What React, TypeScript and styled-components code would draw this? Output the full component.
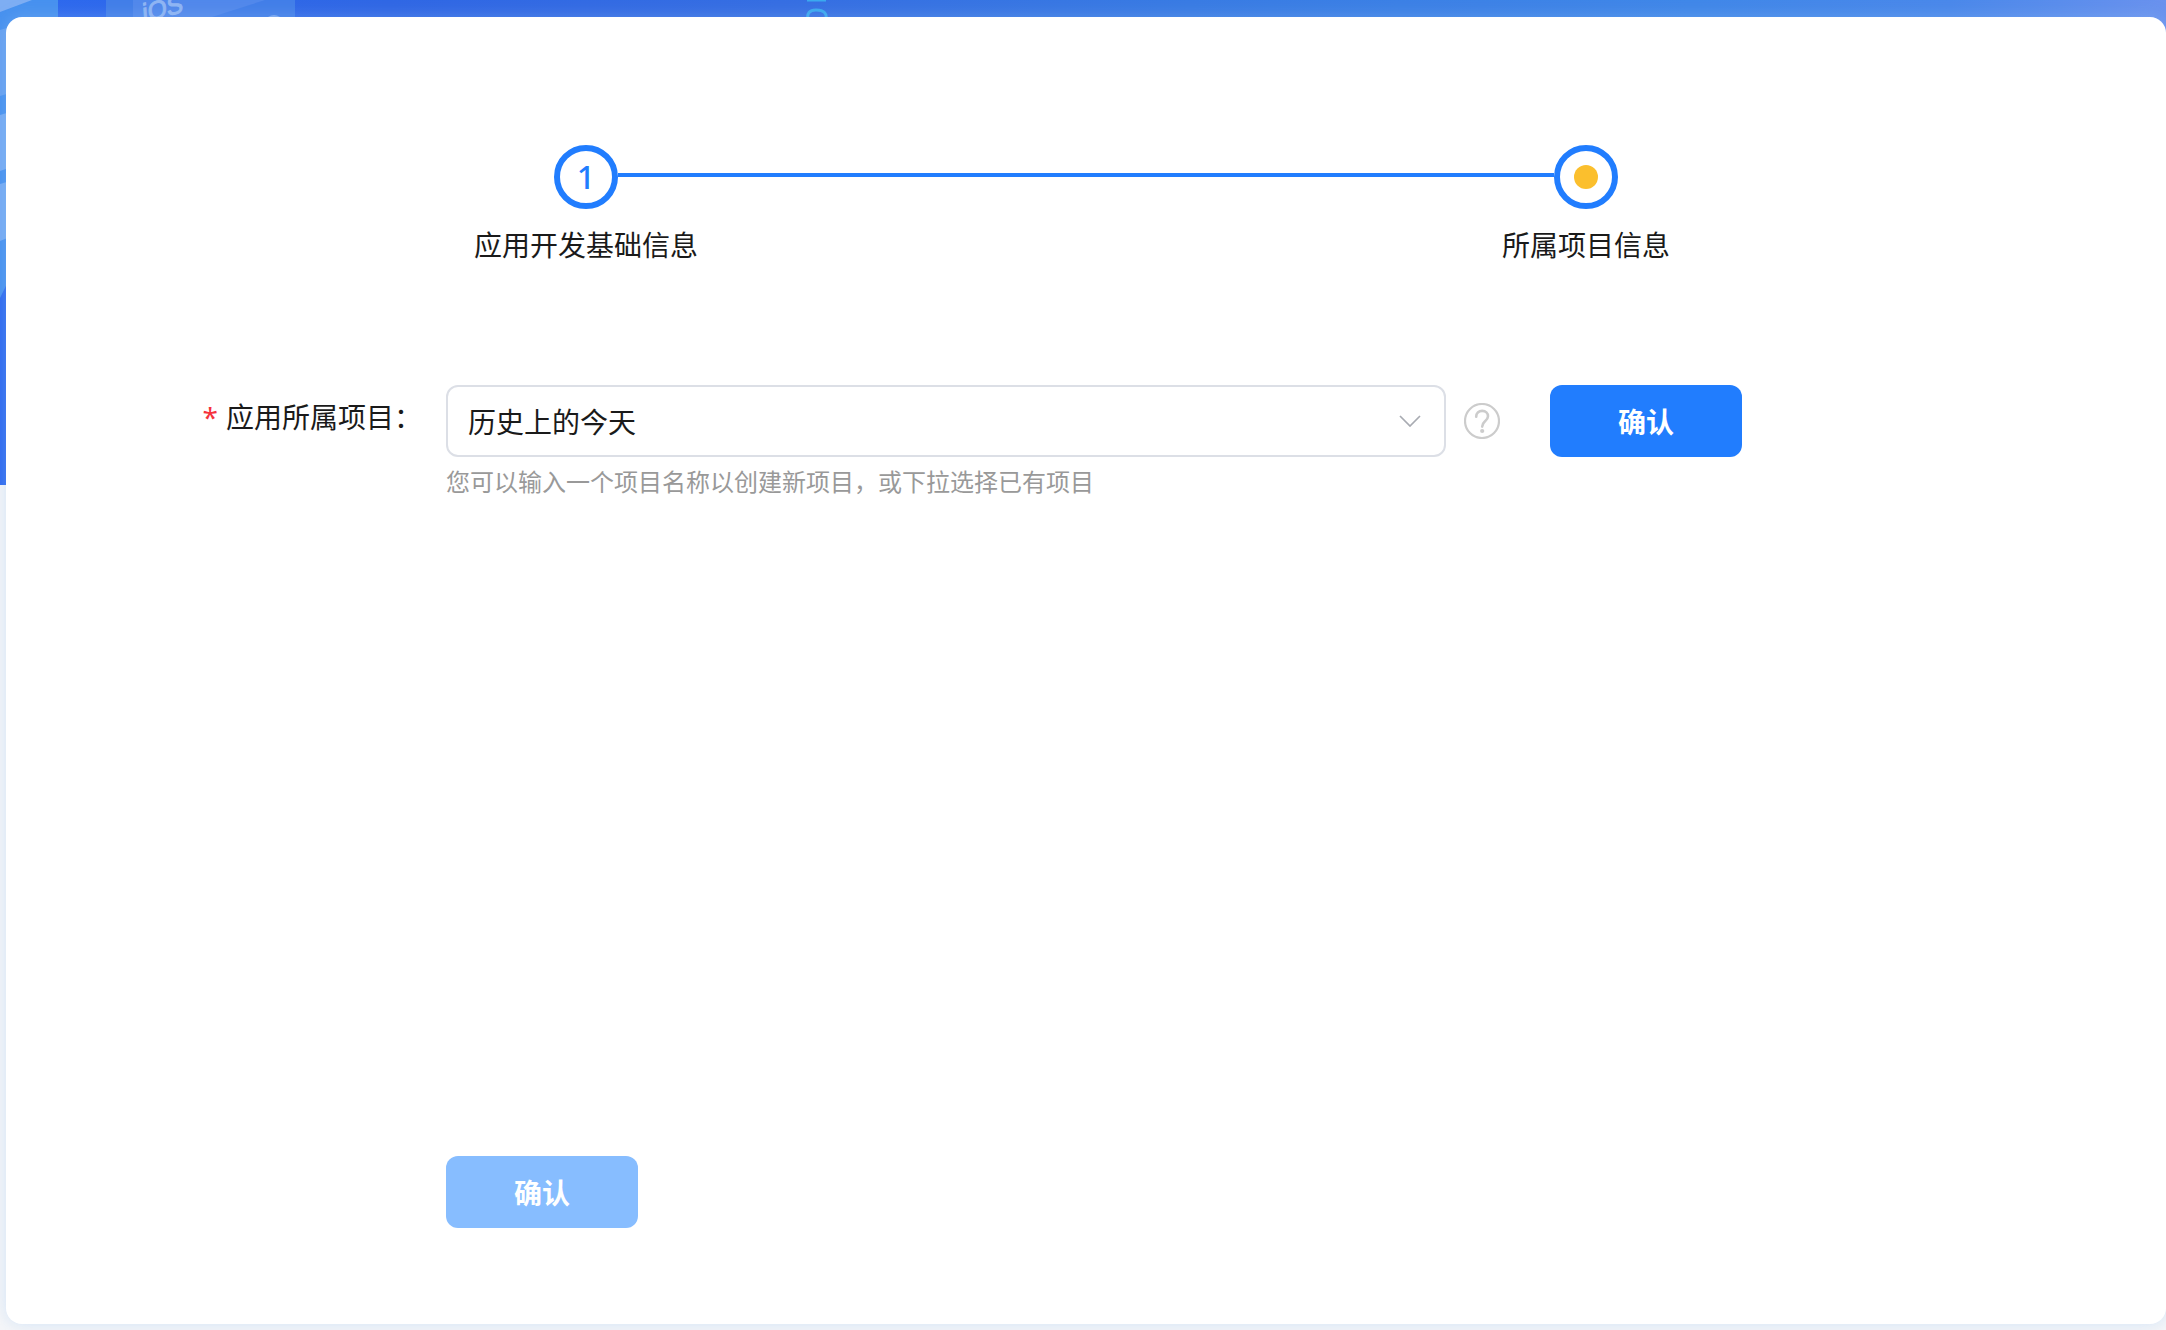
import React, { useState } from "react";
import styled, { createGlobalStyle } from "styled-components";

const blue = "#217dfe";
const sans = `"Noto Sans CJK SC", "Noto Sans", sans-serif`;

const GlobalStyle = createGlobalStyle`
  *, *::before, *::after { box-sizing: border-box; }
  body {
    margin: 0;
    background: #f5f6f8;
    color: #1a1a1a;
    font-family: ${sans};
    font-size: 28px;
    line-height: 40px;
  }
`;

const Page = styled.div`
  position: relative;
  display: flex;
  min-height: 100vh;
  padding: 17px 0 6px 6px;
`;

const Banner = styled.div`
  position: absolute;
  inset: 0 0 auto 0;
  height: 485px;
  overflow: hidden;
  background: linear-gradient(
    90deg,
    #2d69ef 0%,
    #3067e4 18%,
    #366ee2 36%,
    #397be3 55%,
    #4087e8 78%,
    #4a88ea 90%,
    #6a92ee 100%
  );

  svg {
    display: block;
  }
`;

const Card = styled.main`
  position: relative;
  flex: 1;
  display: flex;
  flex-direction: column;
  padding: 128px 80px 96px;
  background: #fff;
  border-radius: 16px;
  box-shadow: 0 0 16px rgba(150, 195, 245, 0.36);
`;

const Steps = styled.ol`
  display: flex;
  margin: 0;
  padding: 0;
  list-style: none;
`;

const Step = styled.li`
  flex: 1;
  display: flex;
  flex-direction: column;
  align-items: center;
  gap: 15px;
`;

const Track = styled.div`
  align-self: stretch;
  display: flex;
  align-items: center;
`;

const Line = styled.span<{ $visible?: boolean }>`
  flex: 1;
  height: 4px;
  margin-bottom: 4px;
  background: ${(p) => (p.$visible ? blue : "transparent")};
`;

const Circle = styled.span`
  display: flex;
  align-items: center;
  justify-content: center;
  width: 64px;
  height: 64px;
  border: 6px solid ${blue};
  border-radius: 50%;
  color: ${blue};
  font-family: "Noto Sans", sans-serif;
  font-size: 32px;
  font-weight: 500;
`;

const Dot = styled.span`
  width: 24px;
  height: 24px;
  border-radius: 50%;
  background: #fbbf2d;
`;

const Form = styled.form`
  flex: 1;
  display: grid;
  grid-template-columns: 336px minmax(0, 1fr);
  grid-template-rows: auto auto 1fr;
  column-gap: 24px;
  margin-top: 121px;
`;

const Label = styled.label`
  padding-top: 11px;
  text-align: right;
`;

const Required = styled.span`
  margin-right: 8px;
  color: #f5323c;
  font-family: "Noto Sans", sans-serif;
`;

const Controls = styled.div`
  display: flex;
  align-items: center;
`;

const SelectBox = styled.div`
  flex: 0 1 1000px;
  display: grid;
  align-items: center;

  > * {
    grid-area: 1 / 1;
  }

  svg {
    justify-self: end;
    margin-right: 25px;
    pointer-events: none;
  }
`;

const Select = styled.select`
  appearance: none;
  width: 100%;
  height: 72px;
  padding: 0 64px 0 20px;
  border: 2px solid #dcdfe6;
  border-radius: 12px;
  background: #fff;
  color: inherit;
  font: inherit;
`;

const HelpButton = styled.button`
  display: flex;
  margin: 0 50px 0 18px;
  padding: 0;
  border: 0;
  background: none;
  cursor: pointer;
`;

const Button = styled.button`
  width: 192px;
  height: 72px;
  padding: 0;
  border: 0;
  border-radius: 12px;
  background: ${blue};
  color: #fff;
  font: inherit;
  font-weight: 700;
  cursor: pointer;

  &:disabled {
    background: #87bdff;
    cursor: default;
  }
`;

const Hint = styled.p`
  grid-column: 2;
  margin: 8px 0 0;
  color: #999;
  font-size: 24px;
  line-height: 32px;
`;

const Footer = styled.div`
  grid-column: 2;
  align-self: end;
  display: flex;
`;

function BannerArt() {
  return (
    <svg width="1200" height="485" aria-hidden="true">
      <path d="M0 0H58V180L0 298Z" fill="#4791ef" />
      <path d="M0 0H32L0 12Z" fill="#7eaef3" />
      <path d="M0 30L20 24V90L0 96Z" fill="#65a0f0" />
      <path d="M0 115L20 109V164L0 171Z" fill="#74aaf3" />
      <path d="M0 184L20 178V233L0 241Z" fill="#74aaf3" />
      <path d="M106 0H295V17H106Z" fill="#427ee8" />
      <path d="M133 0H265L212 17H133Z" fill="#5188eb" />
      <text
        x="0"
        y="0"
        transform="translate(143 22) rotate(-14) skewX(-10)"
        fill="#8fb5f3"
        stroke="#8fb5f3"
        fontFamily="Liberation Sans, sans-serif"
        fontSize="25"
      >
        iOS
      </text>
      <path d="M268 17Q274 13 280 17" fill="#7ba7f0" />
      <path d="M808 20Q806 10 816 10Q828 10 826 20M807 0H826" fill="none" stroke="#3ba9ef" strokeWidth="3" />
    </svg>
  );
}

function Chevron() {
  return (
    <svg width="22" height="12" viewBox="0 0 22 12" fill="none" aria-hidden="true">
      <path d="M1 1L11 11L21 1" stroke="#a8abb2" strokeWidth="1.7" />
    </svg>
  );
}

function HelpIcon() {
  return (
    <svg width="36" height="36" viewBox="0 0 36 36" fill="none" aria-hidden="true">
      <circle cx="18" cy="18" r="17" stroke="#ccc" strokeWidth="2.2" />
      <path
        d="M12.2 13.8C12.2 10.3 14.7 7.9 18.2 7.9C21.7 7.9 24 10.2 24 13.2C24 15.6 22.6 16.8 21 18.2C19.2 19.8 18.2 21 18.2 23.6"
        stroke="#ccc"
        strokeWidth="2.6"
        strokeLinecap="round"
      />
      <circle cx="18.2" cy="28" r="2.1" fill="#ccc" />
    </svg>
  );
}

export default function App() {
  const [project, setProject] = useState("历史上的今天");

  return (
    <>
      <GlobalStyle />
      <Page>
        <Banner>
          <BannerArt />
        </Banner>
        <Card>
          <Steps>
            <Step>
              <Track>
                <Line />
                <Circle>1</Circle>
                <Line $visible />
              </Track>
              <span>应用开发基础信息</span>
            </Step>
            <Step aria-current="step">
              <Track>
                <Line $visible />
                <Circle>
                  <Dot />
                </Circle>
                <Line />
              </Track>
              <span>所属项目信息</span>
            </Step>
          </Steps>

          <Form onSubmit={(e) => e.preventDefault()}>
            <Label htmlFor="project">
              <Required>*</Required>应用所属项目：
            </Label>
            <Controls>
              <SelectBox>
                <Select
                  id="project"
                  value={project}
                  onChange={(e) => setProject(e.target.value)}
                  aria-describedby="project-hint"
                >
                  <option>历史上的今天</option>
                </Select>
                <Chevron />
              </SelectBox>
              <HelpButton type="button" aria-label="帮助">
                <HelpIcon />
              </HelpButton>
              <Button type="button">确认</Button>
            </Controls>
            <Hint id="project-hint">您可以输入一个项目名称以创建新项目，或下拉选择已有项目</Hint>
            <Footer>
              <Button type="submit" disabled>
                确认
              </Button>
            </Footer>
          </Form>
        </Card>
      </Page>
    </>
  );
}
